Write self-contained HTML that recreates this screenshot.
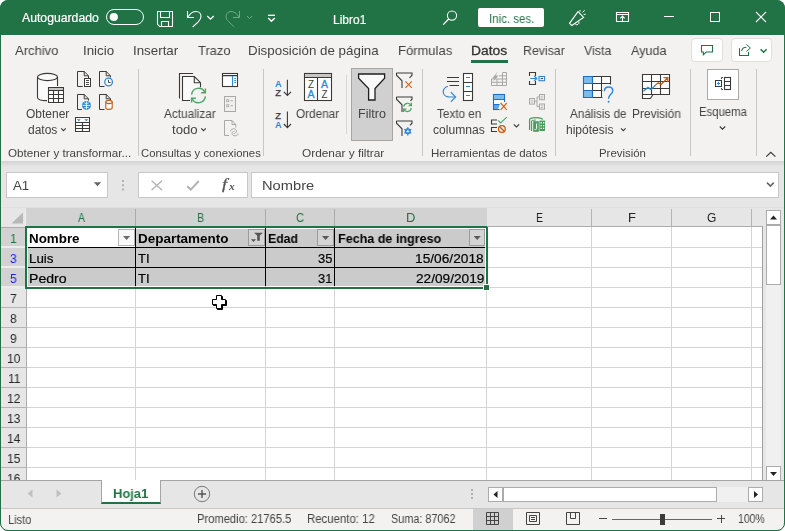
<!DOCTYPE html>
<html lang="es"><head><meta charset="utf-8"><title>Libro1 - Excel</title>
<style>
html,body{margin:0;padding:0;background:#fff;}
body{width:785px;height:531px;overflow:hidden;position:relative;font-family:'Liberation Sans',sans-serif;}
#win{position:absolute;left:0;top:0;width:785px;height:531px;overflow:hidden;border-radius:8px;background:#217346;}
#win *{box-sizing:border-box;}
.a{position:absolute;}
.t{will-change:transform;position:absolute;white-space:nowrap;line-height:1;transform-origin:0 0;font-family:'Liberation Sans',sans-serif;}
svg{position:absolute;overflow:visible;}

</style></head><body>
<div id="win">
<!-- ribbon background -->
<div class="a" style="left:1px;top:35px;width:783px;height:126px;background:#f3f2f1;"></div>
<!-- area below ribbon (formula bar zone) -->
<div class="a" style="left:1px;top:161px;width:783px;height:47px;background:#e6e6e6;"></div>
<div class="a" style="left:1px;top:161px;width:783px;height:6px;background:linear-gradient(#d2d2d2,#dcdcdc 45%,#e6e6e6);"></div>
<div class="a" style="left:1px;top:35px;width:783px;height:1px;background:#fbfbfb;"></div>
<!-- tab underline -->
<div class="a" style="left:471px;top:60px;width:36.5px;height:3px;background:#217346;"></div>
<!-- comment/share buttons -->
<div class="a" style="left:691px;top:38px;width:32px;height:24px;background:#fff;border:1px solid #e1dfdd;border-radius:4px;"></div>
<div class="a" style="left:731px;top:38px;width:41px;height:24px;background:#fff;border:1px solid #e1dfdd;border-radius:4px;"></div>
<!-- Inic. ses. button -->
<div class="a" style="left:478px;top:8px;width:66px;height:19px;background:#fff;border-radius:2px;"></div>
<!-- group separators -->
<div class="a" style="left:138px;top:69px;width:1px;height:87px;background:#c8c6c4;"></div>
<div class="a" style="left:263px;top:69px;width:1px;height:87px;background:#c8c6c4;"></div>
<div class="a" style="left:422px;top:69px;width:1px;height:87px;background:#c8c6c4;"></div>
<div class="a" style="left:555px;top:69px;width:1px;height:87px;background:#c8c6c4;"></div>
<div class="a" style="left:690px;top:69px;width:1px;height:87px;background:#c8c6c4;"></div>
<div class="a" style="left:756px;top:69px;width:1px;height:87px;background:#c8c6c4;"></div>
<div class="a" style="left:346px;top:75px;width:1px;height:59px;background:#d8d6d4;"></div>
<!-- Filtro pressed button -->
<div class="a" style="left:351px;top:68px;width:42px;height:73px;background:#d0d0d0;border:1px solid #a6a6a6;"></div>
<!-- Esquema box -->
<div class="a" style="left:707px;top:69px;width:32px;height:31px;background:#fff;border:1px solid #ababab;"></div>
<!-- name box, buttons box, formula box -->
<div class="a" style="left:6px;top:172px;width:102px;height:26px;background:#fff;border:1px solid #c8c8c8;"></div>
<div class="a" style="left:138px;top:172px;width:110px;height:26px;background:#fff;border:1px solid #c8c8c8;"></div>
<div class="a" style="left:251px;top:172px;width:528px;height:26px;background:#fff;border:1px solid #c8c8c8;"></div>
<svg style="left:0;top:0" width="785" height="36" viewBox="0 0 785 36" fill="none" stroke="#fff" stroke-width="1">
<!-- toggle -->
<rect x="106.5" y="9.5" width="37" height="15" rx="7.5"/>
<circle cx="113.8" cy="17" r="4.1" fill="#fff" stroke="none"/>
<!-- save -->
<path d="M157.5 11.5H172.5V26.5H159.7L157.5 24.3ZM160.5 11.5V17.5H169.5V11.5M161.5 26.5V21.5H168.5V26.5" stroke-width="1.1"/>
<!-- undo -->
<path d="M187.5 11V17.5H194" stroke-width="1.1"/>
<path d="M188 17C190 13.5 193 11.5 196 11.5C199 11.5 201 13.8 201 16.5C201 18.8 199.8 20.2 198.2 21.8L192.7 27" stroke-width="1.1"/>
<path d="M207.3 16L210.5 19.2L213.7 16" stroke-width="1.3"/>
<!-- redo (dim) -->
<g stroke="#6aad82">
<path d="M239.5 11V17.5H233" />
<path d="M239 17C237 13.5 234 11.5 231 11.5C228 11.5 226 13.8 226 16.5C226 18.8 227.2 20.2 228.8 21.8L234.3 27"/>
<path d="M247 16L249.6 18.6L252.2 16"/>
</g>
<!-- customize qat -->
<path d="M268 15.3H275" stroke-width="1.3"/>
<path d="M268.2 18L271.5 21.2L274.8 18" stroke-width="1.6"/>
<!-- search -->
<circle cx="452" cy="15.6" r="4.6" stroke-width="1.1"/>
<path d="M448.7 19L443.2 24.6" stroke-width="1.3"/>
<!-- megaphone -->
<path d="M569.5 23.3L578 11.7L583.6 17.4L571.8 25.5Z" stroke-width="1.1"/>
<path d="M575 23.5A2 2 0 0 0 578.8 21.6" stroke-width="1"/>
<path d="M580 10V11.7M582.6 12.4L584.6 10.2M583.6 14.3H585.6" stroke-width="1"/>
<!-- ribbon display -->
<path d="M616.5 12.5H628.5V21.5H616.5ZM616.5 14.5H628.5M622.5 16.5V21.5M620.3 18.3L622.5 16.1L624.7 18.3" stroke-width="1.1"/>
<!-- window controls -->
<path d="M664 16.5H674"/>
<rect x="710.5" y="12.5" width="9" height="9"/>
<path d="M756 12L766 22M766 12L756 22" stroke-width="1.1"/>
</svg>
<svg style="left:0;top:36px" width="785" height="30" viewBox="0 36 785 30" fill="none" stroke="#217346" stroke-width="1.1">
<path d="M701.5 45.5H712.5V52H706.2L703.3 54.8V52H701.5Z"/>
<path d="M739.5 48.2V55.5H748.5V51.8"/>
<path d="M741.6 51.2C742 48.8 744 47.3 746.4 47.3"/>
<path d="M746.4 44.4L750.4 48L746.4 51.4" stroke-width="1"/>
<path d="M760.6 49.2L763.6 52.2L766.6 49.2" stroke-width="1.5"/>
</svg>
<svg style="left:0;top:170px" width="785" height="32" viewBox="0 170 785 32" fill="none">
<path d="M93.8 182.2H101.2L97.5 186.2Z" fill="#666"/>
<path d="M122 180h2v2h-2zM122 184.3h2v2h-2zM122 188.6h2v2h-2z" fill="#b4b4b4"/>
<path d="M151.6 180.8L162 190M162 180.8L151.6 190" stroke="#b4b4b4" stroke-width="1.5"/>
<path d="M187.2 186.2L190.8 189.6L198.8 181" stroke="#b4b4b4" stroke-width="2"/>
<path d="M767 182.6L770.4 186L773.8 182.6" stroke="#666" stroke-width="1.6"/>
</svg>
<span class="t" style="left:222.4px;top:177.5px;font-family:'Liberation Serif',serif;font-style:italic;font-size:14px;color:#555;-webkit-text-stroke:0.3px #555;transform:scaleX(1.3);">f</span>
<span class="t" style="left:228.8px;top:181.6px;font-family:'Liberation Serif',serif;font-style:italic;font-size:10px;color:#555;font-weight:bold;transform:scaleX(1.15);">x</span>
<svg style="left:0;top:66px" width="140" height="74" viewBox="0 66 140 74" fill="none" stroke="#3b3a39" stroke-width="1">
<!-- big: database + table -->
<path d="M37.5 77V97.6C37.5 99.6 41.8 100.6 47.5 100.6V77Z" fill="#fafafa" stroke="none"/>
<path d="M37.5 77H57.5V87H47.5V100H37.5Z" fill="#fafafa" stroke="none"/>
<ellipse cx="47.5" cy="77" rx="10" ry="3.6" fill="#fafafa" stroke-width="1.1"/>
<path d="M37.5 77V97.4C37.5 99.2 41.5 100.5 47 100.6M57.5 77V86" stroke-width="1.1"/>
<rect x="47.5" y="86.5" width="17" height="17" fill="#fff" stroke="none"/>
<rect x="49" y="88" width="14" height="2.5" fill="#c8c6c4" stroke="none"/>
<path d="M48.5 87.5H63.5V102.5H48.5ZM48.5 90.5H63.5M48.5 94.5H63.5M48.5 98.5H63.5M53.5 90.5V102.5M58.5 90.5V102.5" stroke-width="1.1"/>
<!-- small 1: doc + page -->
<path d="M82.7 86.5H77.5V71.5H84.2L88.5 75.8V78M84.2 71.5V75.8H88.5"/>
<rect x="84.5" y="78.5" width="6" height="8" fill="#fff"/>
<path d="M86 80.5H89M86 82.5H89M86 84.5H89" stroke-width="0.9"/>
<!-- small 2: doc + clock -->
<path d="M104.5 86.5H99.5V71.5H106.2L110.5 75.8V77.5M106.2 71.5V75.8H110.5"/>
<circle cx="108.6" cy="82" r="3.8" fill="#fff" stroke="#2b88d8" stroke-width="1.3"/>
<path d="M108.5 79.8V82.5H110.6" stroke-width="0.9"/>
<!-- small 3: doc + globe -->
<path d="M82 109.5H77.5V94.5H84.2L88.5 98.8V100.5M84.2 94.5V98.8H88.5"/>
<circle cx="86.5" cy="105.4" r="4.5" fill="#2b88d8" stroke="none"/>
<path d="M82.5 105.4H90.5M86.5 101.3V109.5M84.2 102.8C85.6 103.7 87.4 103.7 88.8 102.8M84.2 108C85.6 107.1 87.4 107.1 88.8 108" stroke="#fff" stroke-width="0.8"/>
<!-- small 4: doc + cylinder -->
<path d="M104.5 109.5H99.5V94.5H106.2L110.5 98.8V100M106.2 94.5V98.8H110.5"/>
<path d="M105.8 102V107.8C105.8 108.8 107.2 109.4 109 109.4C110.8 109.4 112.2 108.8 112.2 107.8V102" fill="#fff" stroke="#c55a11" stroke-width="1.1"/>
<ellipse cx="109" cy="102" rx="3.2" ry="1.6" fill="#fff" stroke="#c55a11" stroke-width="1.1"/>
<!-- small 5: table -->
<rect x="74.5" y="116.5" width="16" height="16" fill="#fff" stroke="none"/>
<path d="M75.5 117.5H89.5V131.5H75.5ZM75.5 122.5H89.5M75.5 125.5H89.5M75.5 128.5H89.5M82.5 122.5V131.5" stroke-width="1.1"/>
<path d="M76.8 119.2H80.8L78.8 121.2ZM84.3 119.2H88.3L86.3 121.2Z" fill="#2b88d8" stroke="none"/>
<!-- chevron datos -->
<path d="M61.2 128.3L63.5 130.6L65.8 128.3" stroke-width="1.1"/>
</svg>
<svg style="left:140px;top:66px" width="125" height="74" viewBox="140 66 125 74" fill="none" stroke="#3b3a39" stroke-width="1">
<!-- big: docs + refresh -->
<path d="M193 73.5H179.5V98.5" stroke-width="1.1"/>
<path d="M182.5 76.5H194.3L200.5 82.7V100.5H182.5Z" fill="#fafafa" stroke="none"/>
<path d="M190 100.5H182.5V76.5H194.3L200.5 82.7V87.5M194.3 76.5V82.7H200.5" stroke-width="1.1"/>
<circle cx="198.5" cy="95.5" r="8.6" fill="#f3f2f1" stroke="none"/>
<g stroke="#4ea566" stroke-width="1.4">
<path d="M191.6 94.6A7 7 0 0 1 205 92.6"/>
<path d="M205.4 88.4V92.7H201.2"/>
<path d="M205.4 96.4A7 7 0 0 1 192 98.4"/>
<path d="M191.6 102.6V98.3H195.8"/>
</g>
<path d="M201.2 128.3L203.5 130.6L205.8 128.3" stroke-width="1.1"/>
<!-- small 1: queries pane -->
<rect x="222.5" y="73.5" width="15" height="13" fill="#fff" stroke-width="1.1"/>
<path d="M222.5 75.6H237.5" stroke-width="1.1"/>
<path d="M232.5 76V86" stroke="#2b88d8" stroke-width="1.1"/>
<path d="M234.3 78.5H236M234.3 80.5H236M234.3 82.5H236" stroke="#2b88d8" stroke-width="1"/>
<!-- small 2: properties (disabled) -->
<g stroke="#a9a8a6">
<rect x="224.5" y="96.5" width="11" height="15" fill="#f0efee"/>
<rect x="226.7" y="99.7" width="2" height="2" stroke-width="0.8"/>
<rect x="226.7" y="104.7" width="2" height="2" stroke-width="0.8"/>
<path d="M230.5 100.7H233M230.5 105.7H233" stroke-width="0.9"/>
<!-- small 3: edit links (disabled) -->
<path d="M229 135.5H224.5V120.5H232L235.8 124.5V127.5M232 120.5V124.5H235.8" fill="none"/>
<path d="M230.5 131.2C230.5 129.6 232 128.8 233.6 128.8C235.2 128.8 236.6 129.8 236.6 131.2C236.6 132.6 235.2 133.4 233.8 133.4M238.2 133.4C238.2 135 236.8 135.8 235.2 135.8C233.6 135.8 232 134.8 232 133.4C232 132.2 233 131.4 234.4 131.3" stroke-width="1"/>
</g>
</svg>
<svg style="left:264px;top:66px" width="160" height="76" viewBox="264 66 160 76" fill="none" stroke="#3b3a39" stroke-width="1">
<!-- sort A-Z -->
<g font-family="'Liberation Sans',sans-serif" stroke="none">
<text x="275" y="86.8" font-size="9.4" font-weight="bold" fill="#2b88d8" textLength="6.6" lengthAdjust="spacingAndGlyphs">A</text>
<text x="275.3" y="95.7" font-size="9" fill="#3b3a39" stroke="#3b3a39" stroke-width="0.25" textLength="5.8" lengthAdjust="spacingAndGlyphs">Z</text>
<text x="275.3" y="118.5" font-size="9" fill="#3b3a39" stroke="#3b3a39" stroke-width="0.25" textLength="5.8" lengthAdjust="spacingAndGlyphs">Z</text>
<text x="275" y="127.8" font-size="9.4" font-weight="bold" fill="#2b88d8" textLength="6.6" lengthAdjust="spacingAndGlyphs">A</text>
</g>
<path d="M287.4 79.8V95M283.8 91.8L287.4 95.4L291 91.8" stroke-width="1.1"/>
<path d="M287.4 111.6V127.2M283.8 124L287.4 127.6L291 124" stroke-width="1.1"/>
<!-- big sort -->
<rect x="304.5" y="73.5" width="27" height="27" fill="#fff" stroke-width="1.1"/>
<rect x="305" y="74" width="26" height="3.2" fill="#c8c6c4" stroke="none"/>
<path d="M304.5 77.5H331.5M317.5 77.5V100.5" stroke-width="1.1"/>
<g font-family="'Liberation Sans',sans-serif" stroke="none">
<text x="308" y="87.8" font-size="10.4" fill="#3b3a39" textLength="6" lengthAdjust="spacingAndGlyphs">Z</text>
<text x="307.4" y="98" font-size="10.2" fill="#2b88d8" stroke="#2b88d8" stroke-width="0.3" textLength="7" lengthAdjust="spacingAndGlyphs">A</text>
<text x="321" y="87.8" font-size="10.2" fill="#2b88d8" stroke="#2b88d8" stroke-width="0.3" textLength="7" lengthAdjust="spacingAndGlyphs">A</text>
<text x="321.6" y="98" font-size="10.4" fill="#3b3a39" textLength="6" lengthAdjust="spacingAndGlyphs">Z</text>
</g>
<!-- big funnel -->
<path d="M358.6 74H384.6V78.2L375 88.6V100H368.6V88.6L358.6 78.2Z" fill="#fafafa" stroke="#1f1f1f" stroke-width="1.3"/>
<!-- small funnels -->
<g id="sf" stroke-width="1.1">
<path d="M396.5 73H412V75.2L409.5 78M396.5 73V75.2L402 80.8V88"/>
</g>
<path d="M396.5 97H412V99.2L410.5 100.8M396.5 97V99.2L402 104.8V112" stroke-width="1.1"/>
<path d="M396.5 121H412V123.2L410 125.4M396.5 121V123.2L402 128.8V136" stroke-width="1.1"/>
<!-- orange x -->
<path d="M405.4 81.4L411.8 87.8M411.8 81.4L405.4 87.8" stroke="#d06a1f" stroke-width="1.2"/>
<!-- green refresh -->
<g stroke="#4ea566" stroke-width="1.2">
<path d="M403.8 106.8A3.8 3.8 0 0 1 411 105.4M411.4 102.8V105.6H408.6"/>
<path d="M411.2 108A3.8 3.8 0 0 1 404 109.4M403.6 112V109.2H406.4"/>
</g>
<!-- blue gear -->
<g stroke="#2b88d8">
<circle cx="407.8" cy="131.3" r="2.4" stroke-width="1.3"/>
<path d="M407.8 127.2V135.4M404.3 129.3L411.3 133.3M404.3 133.3L411.3 129.3" stroke-width="1.3"/>
<circle cx="407.8" cy="131.3" r="1.1" fill="#f3f2f1" stroke="none"/>
</g>
</svg>
<svg style="left:424px;top:66px" width="132" height="76" viewBox="424 66 132 76" fill="none" stroke="#3b3a39" stroke-width="1">
<!-- text to columns -->
<path d="M447 77.5H459M447 81.5H459M449.6 85.5H459" stroke-width="1.1"/>
<path d="M448 86.3C445 87.3 443.2 89.2 443.2 91.8C443.2 95 446 97 449.5 97H455" stroke="#2b88d8" stroke-width="1.2"/>
<path d="M450.8 92.2L455.6 97L450.8 101.8" stroke="#2b88d8" stroke-width="1.2"/>
<rect x="463.5" y="73.5" width="9" height="27" fill="#fff" stroke-width="1.1"/>
<path d="M463.5 82.5H472.5M463.5 91.5H472.5" stroke-width="1.1"/>
<path d="M466 77.5H470M466 86.5H470M466 95.5H470" stroke="#2b88d8" stroke-width="1.1"/>
<!-- flash fill (disabled) -->
<g stroke="#a9a8a6">
<path d="M491.5 85.5H506.5V72.5H502.5V85.5M491.5 85.5V79H506.5M491.5 82.3H506.5M497 79V85.5" fill="none"/>
<path d="M497.8 71.6L492 78.6H494.8L492.8 82L498.6 75.4H495.6Z" fill="#a9a8a6" stroke="none"/>
<path d="M499 75.8H506.5" />
</g>
<!-- remove duplicates -->
<rect x="493.5" y="94.5" width="11" height="15" fill="#fff" stroke="#1e6fbf" stroke-width="1.1"/>
<rect x="494" y="95" width="10" height="4" fill="#7cbcec" stroke="none"/>
<path d="M494 105H500L498 109H494Z" fill="#5ca9e6" stroke="none"/>
<path d="M493.5 99.5H504.5M493.5 104.5H500" stroke="#1e6fbf" stroke-width="1.1"/>
<rect x="499.6" y="102" width="8.4" height="8.6" fill="#f3f2f1" stroke="none"/>
<path d="M500.6 103L506.8 109.8M506.8 103L500.6 109.8" stroke="#d06a1f" stroke-width="1.2"/>
<!-- data validation -->
<path d="M497 120H491.5V124H497M497 127.5H491.5V131.5H497" stroke-width="1.1"/>
<path d="M498 120.4L500.6 123L506.8 117.2" stroke="#4ea566" stroke-width="1.1"/>
<circle cx="501.9" cy="129" r="3.4" fill="#f3f2f1" stroke="#c55a11" stroke-width="1.3"/>
<path d="M499.6 126.7L504.2 131.3" stroke="#c55a11" stroke-width="1.3"/>
<path d="M513.8 124.3L516.5 127L519.2 124.3" stroke-width="1.1"/>
<!-- consolidate -->
<path d="M529.5 76V72.5H535.5V76M529.5 81V84.5H535.5V81" stroke-width="1.1"/>
<path d="M530.3 78.5H536.6M534.2 76L536.8 78.5L534.2 81" stroke="#2b88d8" stroke-width="1.1"/>
<rect x="539" y="76.5" width="5.6" height="4.2" stroke="#2b88d8" stroke-width="1.1"/>
<path d="M540.8 78.6H543" stroke-width="1"/>
<!-- relationships (disabled) -->
<g stroke="#a9a8a6">
<rect x="529.5" y="98.5" width="5" height="5.6" fill="#f0efee"/>
<rect x="539.5" y="94.5" width="5" height="5.2" fill="#f0efee"/>
<rect x="539.5" y="104" width="5" height="5.2" fill="#f0efee"/>
<path d="M534.5 101.3H537V97H539.5M537 101.3V106.6H539.5"/>
<path d="M530.8 100.4H533.2M530.8 102.2H533.2M540.8 96.3H543.2M540.8 98H543.2M540.8 105.8H543.2M540.8 107.5H543.2" stroke-width="0.7"/>
</g>
<!-- data model -->
<g stroke="#4a9c5a">
<path d="M529.6 130V119.8C529.6 118.4 532.6 117.6 536 117.6C539.4 117.6 542.4 118.4 542.4 119.8" stroke-width="1.3"/>
<path d="M531.6 131V121.6C531.6 120.6 533.6 120 536 120" stroke-width="1.1"/>
<rect x="533.2" y="121.2" width="5.6" height="10.6" fill="#4a9c5a" stroke="none"/>
<path d="M536.6 123.4V128.6C536.6 129.6 535.6 129.8 534.6 129.4" stroke="#fff" stroke-width="1"/>
<rect x="539.4" y="120.6" width="5.6" height="10.4" fill="#4a9c5a" stroke="none"/>
<path d="M540.6 122.8H541.8M543 122.8H544.2M540.6 125.6H541.8M543 125.6H544.2M540.6 128.4H541.8M543 128.4H544.2" stroke="#fff" stroke-width="1.4"/>
</g>
</svg>
<svg style="left:556px;top:66px" width="228" height="94" viewBox="556 66 228 94" fill="none" stroke="#3b3a39" stroke-width="1">
<!-- what-if -->
<rect x="583.5" y="76.5" width="27" height="21" fill="#fff" stroke="none"/>
<rect x="583.5" y="76.5" width="9" height="7" fill="#7cbcec" stroke="none"/>
<rect x="583.5" y="90.5" width="9" height="7" fill="#7cbcec" stroke="none"/>
<path d="M592.5 76.5H610.5V84.5M592.5 97.5H604M592.5 76.5V97.5M601.5 76.5V97.5M592.5 83.5H610.5M592.5 90.5H603" stroke-width="1.1"/>
<path d="M583.5 76.5H592.5V83.5H583.5ZM583.5 90.5H592.5V97.5H583.5ZM583.5 83.5V90.5" stroke="#1e6fbf" stroke-width="1.1"/>
<rect x="602.4" y="85.4" width="11.6" height="18" fill="#f3f2f1" stroke="none"/>
<path d="M604.4 91.2C604.4 88.6 606.3 87 608.7 87C611.1 87 612.8 88.6 612.8 90.8C612.8 92.8 611.4 93.8 610 95.2C608.9 96.3 608.6 97.2 608.6 98.8" stroke="#2b88d8" stroke-width="1.4"/>
<circle cx="608.6" cy="101.7" r="0.95" fill="#2b88d8" stroke="none"/>
<path d="M621 128.3L623.3 130.6L625.6 128.3" stroke-width="1.1"/>
<!-- forecast -->
<path d="M642.5 74.5H669.5V94.5H653L650.4 98.5H642.5Z" fill="#fff" stroke-width="1.1"/>
<path d="M651.5 74.5V94.5M660.5 74.5V94.5M642.5 81.5H669.5M642.5 88.5H669.5M642.5 94.5H653" stroke-width="1.1"/>
<path d="M643.4 91.2L648 87.4L651 89.6L656.2 84.4" stroke="#2b88d8" stroke-width="1.3"/>
<path d="M656.2 84.4L658.2 82.8L661 84.6L667.2 78.2M663.4 77.6H667.8V82" stroke="#c55a11" stroke-width="1.3"/>
<!-- esquema icon -->
<rect x="715.5" y="80.5" width="6" height="6" fill="#fff" stroke-width="1"/>
<path d="M718.5 82V85M717 83.5H720" stroke="#2b88d8" stroke-width="1"/>
<path d="M723 77.5H721.5V79M721.5 88V89.5H723" stroke-width="0.9"/>
<rect x="724.5" y="77.5" width="6" height="12" fill="#fff" stroke-width="1.1"/>
<path d="M724.5 81.5H730.5M724.5 85.5H730.5" stroke-width="1"/>
<path d="M719.8 126.5L722.5 129.2L725.2 126.5" stroke-width="1.1"/>
<!-- collapse ribbon -->
<path d="M766.2 156.6L770.8 152.4L775.4 156.6" stroke-width="1.2"/>
</svg>
<!-- sheet area -->
<div class="a" style="left:1px;top:208px;width:783px;height:273px;background:#e6e6e6;"></div>
<div class="a" style="left:26px;top:227px;width:737px;height:254px;background:#fff;"></div>
<!-- selected col headers -->
<div class="a" style="left:26px;top:208px;width:461px;height:18px;background:#d2d2d2;"></div>
<!-- selected row headers -->
<div class="a" style="left:1px;top:228px;width:24px;height:59px;background:#d2d2d2;"></div>
<!-- horizontal gridlines -->
<div class="a" style="left:26px;top:247px;width:736px;height:241px;background:repeating-linear-gradient(#d4d4d4 0,#d4d4d4 1px,transparent 1px,transparent 20px);"></div>
<!-- vertical gridlines -->
<div class="a" style="left:135px;top:227px;width:1px;height:254px;background:#d4d4d4;"></div>
<div class="a" style="left:265px;top:227px;width:1px;height:254px;background:#d4d4d4;"></div>
<div class="a" style="left:334px;top:227px;width:1px;height:254px;background:#d4d4d4;"></div>
<div class="a" style="left:486px;top:227px;width:1px;height:254px;background:#d4d4d4;"></div>
<div class="a" style="left:591px;top:227px;width:1px;height:254px;background:#d4d4d4;"></div>
<div class="a" style="left:671px;top:227px;width:1px;height:254px;background:#d4d4d4;"></div>
<div class="a" style="left:751px;top:227px;width:1px;height:254px;background:#d4d4d4;"></div>
<!-- grey fill of selected cells -->
<div class="a" style="left:28px;top:229px;width:457px;height:57px;background:#cbcbcb;"></div>
<div class="a" style="left:28px;top:229px;width:107px;height:18px;background:#fff;"></div>
<!-- black cell borders -->
<div class="a" style="left:28px;top:247px;width:457px;height:1px;background:#000;"></div>
<div class="a" style="left:28px;top:267px;width:457px;height:1px;background:#000;"></div>
<div class="a" style="left:135px;top:228px;width:1px;height:58px;background:#000;"></div>
<div class="a" style="left:265px;top:228px;width:1px;height:58px;background:#000;"></div>
<div class="a" style="left:334px;top:228px;width:1px;height:58px;background:#000;"></div>
<!-- selection border -->
<div class="a" style="left:25px;top:226px;width:463px;height:63px;border:2px solid #217346;"></div>
<div class="a" style="left:483px;top:284px;width:7px;height:7px;background:#fff;"></div>
<div class="a" style="left:484px;top:285px;width:5px;height:5px;background:#217346;"></div>
<!-- header borders -->
<div class="a" style="left:1px;top:207px;width:783px;height:1px;background:#e0e0e0;"></div>
<!-- sheet right/bottom border -->
<div class="a" style="left:762px;top:227px;width:1px;height:254px;background:#9f9f9f;"></div>
<div class="a" style="left:763px;top:208px;width:21px;height:273px;background:#e6e6e6;"></div>
<!-- header bottom border & separators -->
<div class="a" style="left:487px;top:226px;width:276px;height:1px;background:#ababab;"></div>
<div class="a" style="left:135px;top:209px;width:1px;height:17px;background:#ababab;"></div>
<div class="a" style="left:265px;top:209px;width:1px;height:17px;background:#ababab;"></div>
<div class="a" style="left:334px;top:209px;width:1px;height:17px;background:#ababab;"></div>
<div class="a" style="left:591px;top:209px;width:1px;height:18px;background:#b4b4b4;"></div>
<div class="a" style="left:671px;top:209px;width:1px;height:18px;background:#b4b4b4;"></div>
<div class="a" style="left:751px;top:209px;width:1px;height:18px;background:#b4b4b4;"></div>
<!-- corner triangle -->
<svg style="left:11px;top:212px" width="13" height="12" viewBox="0 0 13 12"><path d="M12 0.5V11.5H0.5Z" fill="#b8b8b8"/></svg>
<div class="a" style="left:25px;top:209px;width:1px;height:17px;background:#f0f0f0;"></div>
<!-- row header right border & separators -->
<div class="a" style="left:26px;top:289px;width:1px;height:192px;background:#ababab;"></div>
<div class="a" style="left:1px;top:307px;width:25px;height:181px;background:repeating-linear-gradient(#b4b4b4 0,#b4b4b4 1px,transparent 1px,transparent 20px);"></div>
<div class="a" style="left:1px;top:246px;width:24px;height:2px;background:#ececec;"></div>
<div class="a" style="left:1px;top:266px;width:24px;height:2px;background:#ececec;"></div>
<div class="a" style="left:1px;top:286px;width:24px;height:2px;background:#ececec;"></div>
<div class="a" style="left:1px;top:227px;width:24px;height:1px;background:#ababab;"></div>
<!-- vertical scrollbar -->
<div class="a" style="left:766px;top:284px;width:15px;height:183px;background:#f0f0f0;"></div>
<div class="a" style="left:766px;top:210px;width:15px;height:15px;background:#fff;border:1px solid #ababab;"></div>
<div class="a" style="left:766px;top:225px;width:15px;height:60px;background:#fff;border:1px solid #ababab;"></div>
<div class="a" style="left:766px;top:466px;width:15px;height:15px;background:#fff;border:1px solid #ababab;"></div>
<svg style="left:766px;top:210px" width="15" height="15" viewBox="0 0 15 15"><path d="M4 9.5H11L7.5 5.5Z" fill="#222"/></svg>
<svg style="left:766px;top:466px" width="15" height="15" viewBox="0 0 15 15"><path d="M4 6H11L7.5 10Z" fill="#222"/></svg>
<!-- filter buttons -->
<div class="a" style="left:118px;top:229px;width:17px;height:17px;background:#f8f8f8;border:1px solid #b4b4b4;"></div>
<div class="a" style="left:248px;top:229px;width:17px;height:17px;background:#d4d4d4;border:1px solid #9c9c9c;"></div>
<div class="a" style="left:317px;top:229px;width:17px;height:17px;background:#d4d4d4;border:1px solid #9c9c9c;"></div>
<div class="a" style="left:469px;top:229px;width:16px;height:17px;background:#d4d4d4;border:1px solid #9c9c9c;"></div>
<svg style="left:0;top:226px" width="500" height="90" viewBox="0 226 500 90">
<path d="M123 236H130.2L126.6 240Z" fill="#6a6a6a"/>
<path d="M322 236H329.2L325.6 240Z" fill="#5a5a5a"/>
<path d="M473.6 236H480.8L477.2 240Z" fill="#5a5a5a"/>
<path d="M254 232.8H263L259.8 235.4V240.8H257.2V235.4Z" fill="#555"/>
<path d="M251 239.2H256L253.5 242Z" fill="#555"/>
<!-- cursor -->
<path d="M217.5 296.5H222.5V300.5H226.5V305.5H222.5V309.5H217.5V305.5H213.5V300.5H217.5Z" fill="#000" stroke="#000" stroke-width="1"/>
<path d="M216.5 295.5H221.5V299.5H225.5V304.5H221.5V308.5H216.5V304.5H212.5V299.5H216.5Z" fill="#fff" stroke="#000" stroke-width="1"/>
</svg>

<span class="t" style="left:22.40px;top:12.02px;font-size:12px;color:#fff;font-weight:normal;transform:scaleX(1.0187);-webkit-text-stroke:0.2px #fff;">Autoguardado</span>
<span class="t" style="left:333.40px;top:14.02px;font-size:12px;color:#fff;font-weight:normal;transform:scaleX(0.9953);-webkit-text-stroke:0.2px #fff;">Libro1</span>
<span class="t" style="left:488.64px;top:13.02px;font-size:12px;color:#217346;font-weight:normal;transform:scaleX(0.9591);">Inic. ses.</span>
<span class="t" style="left:14.80px;top:43.86px;font-size:13.33px;color:#444444;font-weight:normal;transform:scaleX(0.9783);">Archivo</span>
<span class="t" style="left:83.06px;top:43.86px;font-size:13.33px;color:#444444;font-weight:normal;transform:scaleX(0.9949);">Inicio</span>
<span class="t" style="left:133.06px;top:43.86px;font-size:13.33px;color:#444444;font-weight:normal;transform:scaleX(0.9897);">Insertar</span>
<span class="t" style="left:197.96px;top:43.86px;font-size:13.33px;color:#444444;font-weight:normal;transform:scaleX(0.9679);">Trazo</span>
<span class="t" style="left:248.20px;top:43.86px;font-size:13.33px;color:#444444;font-weight:normal;transform:scaleX(1.0023);">Disposición de página</span>
<span class="t" style="left:398.02px;top:43.86px;font-size:13.33px;color:#444444;font-weight:normal;transform:scaleX(0.9759);">Fórmulas</span>
<span class="t" style="left:523.38px;top:43.86px;font-size:13.33px;color:#444444;font-weight:normal;transform:scaleX(0.9250);">Revisar</span>
<span class="t" style="left:583.77px;top:43.86px;font-size:13.33px;color:#444444;font-weight:normal;transform:scaleX(0.9299);">Vista</span>
<span class="t" style="left:631.10px;top:43.86px;font-size:13.33px;color:#444444;font-weight:normal;transform:scaleX(0.9440);">Ayuda</span>
<span class="t" style="left:471.36px;top:43.86px;font-size:13.33px;color:#333;font-weight:normal;transform:scaleX(1.0376);-webkit-text-stroke:0.3px #333;">Datos</span>
<span class="t" style="left:26.10px;top:108.02px;font-size:12px;color:#444444;font-weight:normal;transform:scaleX(0.9918);">Obtener</span>
<span class="t" style="left:28.10px;top:124.02px;font-size:12px;color:#444444;font-weight:normal;transform:scaleX(0.9965);">datos</span>
<span class="t" style="left:164.40px;top:108.02px;font-size:12px;color:#444444;font-weight:normal;transform:scaleX(0.9829);">Actualizar</span>
<span class="t" style="left:171.73px;top:124.02px;font-size:12px;color:#444444;font-weight:normal;transform:scaleX(1.0989);">todo</span>
<span class="t" style="left:296.11px;top:108.02px;font-size:12px;color:#444444;font-weight:normal;transform:scaleX(0.9803);">Ordenar</span>
<span class="t" style="left:357.55px;top:108.02px;font-size:12px;color:#444444;font-weight:normal;transform:scaleX(1.0455);">Filtro</span>
<span class="t" style="left:437.16px;top:108.02px;font-size:12px;color:#444444;font-weight:normal;transform:scaleX(0.9763);">Texto en</span>
<span class="t" style="left:433.10px;top:124.02px;font-size:12px;color:#444444;font-weight:normal;transform:scaleX(1.0099);">columnas</span>
<span class="t" style="left:569.60px;top:108.02px;font-size:12px;color:#444444;font-weight:normal;transform:scaleX(0.9739);">Análisis de</span>
<span class="t" style="left:565.85px;top:124.02px;font-size:12px;color:#444444;font-weight:normal;transform:scaleX(1.0032);">hipótesis</span>
<span class="t" style="left:631.61px;top:108.02px;font-size:12px;color:#444444;font-weight:normal;transform:scaleX(0.9895);">Previsión</span>
<span class="t" style="left:699.06px;top:106.02px;font-size:12px;color:#444444;font-weight:normal;transform:scaleX(0.9447);">Esquema</span>
<span class="t" style="left:7.86px;top:147.62px;font-size:10.8px;color:#444444;font-weight:normal;transform:scaleX(1.0809);">Obtener y transformar...</span>
<span class="t" style="left:141.07px;top:147.62px;font-size:10.8px;color:#444444;font-weight:normal;transform:scaleX(1.0508);">Consultas y conexiones</span>
<span class="t" style="left:302.05px;top:147.62px;font-size:10.8px;color:#444444;font-weight:normal;transform:scaleX(1.0963);">Ordenar y filtrar</span>
<span class="t" style="left:430.53px;top:147.62px;font-size:10.8px;color:#444444;font-weight:normal;transform:scaleX(1.0654);">Herramientas de datos</span>
<span class="t" style="left:599.34px;top:147.62px;font-size:10.8px;color:#444444;font-weight:normal;transform:scaleX(1.0573);">Previsión</span>
<span class="t" style="left:13.20px;top:179.02px;font-size:13px;color:#444444;font-weight:normal;transform:scaleX(1.0230);">A1</span>
<span class="t" style="left:262.27px;top:179.02px;font-size:13px;color:#444444;font-weight:normal;transform:scaleX(1.1285);">Nombre</span>
<span class="t" style="left:77.70px;top:212.02px;font-size:12px;color:#217346;font-weight:normal;transform:scaleX(0.8750);">A</span>
<span class="t" style="left:197.11px;top:212.02px;font-size:12px;color:#217346;font-weight:normal;transform:scaleX(0.8923);">B</span>
<span class="t" style="left:296.24px;top:212.02px;font-size:12px;color:#217346;font-weight:normal;transform:scaleX(0.9290);">C</span>
<span class="t" style="left:405.61px;top:212.02px;font-size:12px;color:#217346;font-weight:normal;transform:scaleX(1.0857);">D</span>
<span class="t" style="left:536.32px;top:212.02px;font-size:12px;color:#222;font-weight:normal;transform:scaleX(0.8769);">E</span>
<span class="t" style="left:628.12px;top:212.02px;font-size:12px;color:#222;font-weight:normal;transform:scaleX(1.0783);">F</span>
<span class="t" style="left:707.10px;top:212.02px;font-size:12px;color:#222;font-weight:normal;transform:scaleX(1.0000);">G</span>
<span class="t" style="left:10.11px;top:232.02px;font-size:13px;color:#217346;font-weight:normal;transform:scaleX(0.9300);">1</span>
<span class="t" style="left:10.23px;top:252.02px;font-size:13px;color:#1a1aff;font-weight:normal;transform:scaleX(0.9300);">3</span>
<span class="t" style="left:10.23px;top:272.02px;font-size:13px;color:#1a1aff;font-weight:normal;transform:scaleX(0.9300);">5</span>
<span class="t" style="left:10.23px;top:292.02px;font-size:13px;color:#262626;font-weight:normal;transform:scaleX(0.9300);">7</span>
<span class="t" style="left:10.23px;top:312.02px;font-size:13px;color:#262626;font-weight:normal;transform:scaleX(0.9300);">8</span>
<span class="t" style="left:10.34px;top:332.02px;font-size:13px;color:#262626;font-weight:normal;transform:scaleX(0.9300);">9</span>
<span class="t" style="left:7.33px;top:352.02px;font-size:13px;color:#262626;font-weight:normal;transform:scaleX(0.9300);">10</span>
<span class="t" style="left:7.91px;top:372.02px;font-size:13px;color:#262626;font-weight:normal;transform:scaleX(0.9300);">11</span>
<span class="t" style="left:7.44px;top:392.02px;font-size:13px;color:#262626;font-weight:normal;transform:scaleX(0.9300);">12</span>
<span class="t" style="left:7.33px;top:412.02px;font-size:13px;color:#262626;font-weight:normal;transform:scaleX(0.9300);">13</span>
<span class="t" style="left:7.33px;top:432.02px;font-size:13px;color:#262626;font-weight:normal;transform:scaleX(0.9300);">14</span>
<span class="t" style="left:7.33px;top:452.02px;font-size:13px;color:#262626;font-weight:normal;transform:scaleX(0.9300);">15</span>
<span class="t" style="left:7.33px;top:472.02px;font-size:13px;color:#262626;font-weight:normal;transform:scaleX(0.9300);">16</span>
<span class="t" style="left:29.43px;top:232.02px;font-size:13px;color:#000;font-weight:bold;transform:scaleX(1.0292);">Nombre</span>
<span class="t" style="left:138.02px;top:232.02px;font-size:13px;color:#000;font-weight:bold;transform:scaleX(1.0349);">Departamento</span>
<span class="t" style="left:268.29px;top:232.02px;font-size:13px;color:#000;font-weight:bold;transform:scaleX(0.9455);">Edad</span>
<span class="t" style="left:337.78px;top:232.02px;font-size:13px;color:#000;font-weight:bold;transform:scaleX(0.9655);">Fecha de ingreso</span>
<span class="t" style="left:28.97px;top:252.02px;font-size:13px;color:#000;font-weight:normal;transform:scaleX(1.0267);-webkit-text-stroke:0.2px #000;">Luis</span>
<span class="t" style="left:28.92px;top:272.02px;font-size:13px;color:#000;font-weight:normal;transform:scaleX(1.0848);-webkit-text-stroke:0.2px #000;">Pedro</span>
<span class="t" style="left:137.95px;top:252.02px;font-size:13px;color:#000;font-weight:normal;transform:scaleX(1.0100);-webkit-text-stroke:0.2px #000;">TI</span>
<span class="t" style="left:137.95px;top:272.02px;font-size:13px;color:#000;font-weight:normal;transform:scaleX(1.0100);-webkit-text-stroke:0.2px #000;">TI</span>
<span class="t" style="left:318.00px;top:252.02px;font-size:13px;color:#000;font-weight:normal;transform:scaleX(0.9926);-webkit-text-stroke:0.2px #000;">35</span>
<span class="t" style="left:318.01px;top:272.02px;font-size:13px;color:#000;font-weight:normal;transform:scaleX(0.9887);-webkit-text-stroke:0.2px #000;">31</span>
<span class="t" style="left:415.44px;top:252.02px;font-size:13px;color:#000;font-weight:normal;transform:scaleX(1.0551);-webkit-text-stroke:0.2px #000;">15/06/2018</span>
<span class="t" style="left:415.71px;top:272.02px;font-size:13px;color:#000;font-weight:normal;transform:scaleX(1.0510);-webkit-text-stroke:0.2px #000;">22/09/2019</span>
<!-- tab bar -->
<div class="a" style="left:1px;top:480px;width:783px;height:28px;background:#e6e6e6;border-top:1px solid #a5a5a5;"></div>
<div class="a" style="left:101px;top:480px;width:60px;height:24px;background:#fff;border-left:1px solid #a5a5a5;border-right:1px solid #a5a5a5;border-bottom:2px solid #217346;"></div>
<!-- status bar -->
<div class="a" style="left:1px;top:508px;width:783px;height:22px;background:#f3f2f1;border-top:1px solid #c6c6c6;"></div>
<div class="a" style="left:473px;top:509px;width:40px;height:21px;background:#d0d0d0;"></div>
<!-- sheet nav arrows -->
<svg style="left:27px;top:489px" width="6" height="9" viewBox="0 0 6 9"><path d="M5.5 0.5V8.5L0.5 4.5Z" fill="#c0c0c0"/></svg>
<svg style="left:56px;top:489px" width="6" height="9" viewBox="0 0 6 9"><path d="M0.5 0.5V8.5L5.5 4.5Z" fill="#c0c0c0"/></svg>
<!-- new sheet -->
<svg style="left:193px;top:485px" width="18" height="18" viewBox="0 0 18 18"><circle cx="9" cy="9" r="7.7" fill="none" stroke="#7a7a7a" stroke-width="1"/><path d="M9 5V13M5 9H13" stroke="#555" stroke-width="1.4"/></svg>
<!-- dots -->
<div class="a" style="left:471px;top:489px;width:2px;height:2px;background:#b0b0b0;"></div>
<div class="a" style="left:471px;top:493px;width:2px;height:2px;background:#b0b0b0;"></div>
<div class="a" style="left:471px;top:497px;width:2px;height:2px;background:#b0b0b0;"></div>
<!-- h scroll -->
<div class="a" style="left:503px;top:487px;width:245px;height:15px;background:#f0f0f0;"></div>
<div class="a" style="left:488px;top:487px;width:15px;height:15px;background:#fff;border:1px solid #ababab;"></div>
<div class="a" style="left:503px;top:487px;width:214px;height:15px;background:#fff;border:1px solid #ababab;"></div>
<div class="a" style="left:748px;top:487px;width:15px;height:15px;background:#fff;border:1px solid #ababab;"></div>
<svg style="left:488px;top:487px" width="15" height="15" viewBox="0 0 15 15"><path d="M9.5 4V11L5.5 7.5Z" fill="#222"/></svg>
<svg style="left:748px;top:487px" width="15" height="15" viewBox="0 0 15 15"><path d="M6 4V11L10 7.5Z" fill="#222"/></svg>
<!-- view icons -->
<svg style="left:486px;top:512px" width="13" height="13" viewBox="0 0 13 13"><path d="M0.5 0.5H12.5V12.5H0.5ZM4.5 0.5V12.5M8.5 0.5V12.5M0.5 4.5H12.5M0.5 8.5H12.5" fill="none" stroke="#444" stroke-width="1"/></svg>
<svg style="left:526px;top:512px" width="14" height="13" viewBox="0 0 14 13"><path d="M0.5 0.5H13.5V12.5H0.5Z" fill="none" stroke="#444"/><path d="M3.5 3.5H10.5V9.5H3.5ZM5 5.5H9M5 7.5H9" fill="none" stroke="#444"/></svg>
<svg style="left:566px;top:512px" width="14" height="13" viewBox="0 0 14 13"><path d="M0.5 0.5H13.5V12.5H0.5ZM4.5 0.5V6.5H9.5V0.5" fill="none" stroke="#444"/></svg>
<!-- zoom slider -->
<div class="a" style="left:599px;top:518px;width:8px;height:1px;background:#444;"></div>
<div class="a" style="left:612px;top:519px;width:100px;height:1px;background:#666;"></div>
<div class="a" style="left:660px;top:514px;width:5px;height:11px;background:#3b3b3b;"></div>
<div class="a" style="left:717px;top:518px;width:8px;height:1px;background:#444;"></div>
<div class="a" style="left:720.5px;top:515px;width:1px;height:8px;background:#444;"></div>
<div class="a" style="left:0;top:0;width:785px;height:531px;border:1px solid #217346;border-radius:8px;pointer-events:none;"></div>

<span class="t" style="left:112.93px;top:486.85px;font-size:13.33px;color:#217346;font-weight:bold;transform:scaleX(0.9686);">Hoja1</span>
<span class="t" style="left:7.98px;top:514.02px;font-size:12px;color:#444444;font-weight:normal;transform:scaleX(0.9208);">Listo</span>
<span class="t" style="left:197.37px;top:513.02px;font-size:12px;color:#444444;font-weight:normal;transform:scaleX(0.9300);">Promedio: 21765.5</span>
<span class="t" style="left:307.45px;top:513.02px;font-size:12px;color:#444444;font-weight:normal;transform:scaleX(0.9491);">Recuento: 12</span>
<span class="t" style="left:390.75px;top:513.02px;font-size:12px;color:#444444;font-weight:normal;transform:scaleX(0.9039);">Suma: 87062</span>
<span class="t" style="left:738.03px;top:513.02px;font-size:12px;color:#444444;font-weight:normal;transform:scaleX(0.8718);">100%</span>
</div>
</body></html>
